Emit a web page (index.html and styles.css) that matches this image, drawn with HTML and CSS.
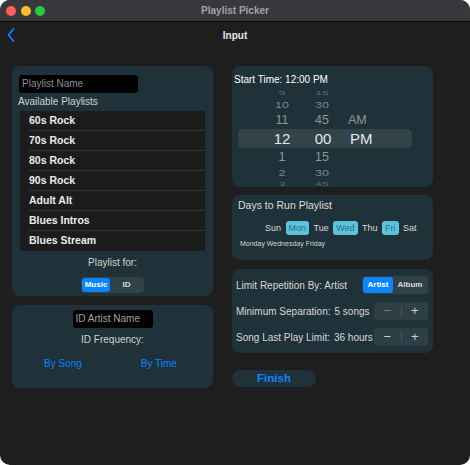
FILE: index.html
```html
<!DOCTYPE html>
<html>
<head>
<meta charset="utf-8">
<link rel="stylesheet" href="styles.css">
</head>
<body>
<div class="window">
  <div class="titlebar">
    <div class="lights">
      <span class="light red"></span>
      <span class="light yellow"></span>
      <span class="light green"></span>
    </div>
    <div class="title">Playlist Picker</div>
    <div></div>
  </div>
  <div class="nav">
    <div class="nav-left">
      <svg class="back" width="8" height="14" viewBox="0 0 8 14"><path d="M6.5 1 L1.5 7 L6.5 13" fill="none" stroke="#0a84ff" stroke-width="1.8" stroke-linecap="round" stroke-linejoin="round"/></svg>
    </div>
    <div class="nav-title">Input</div>
    <div></div>
  </div>
  <div class="content">
    <div class="col">
      <section class="panel playlists">
        <div class="field name-field">Playlist Name</div>
        <div class="label avail">Available Playlists</div>
        <div class="list">
          <div class="row">60s Rock</div>
          <div class="row">70s Rock</div>
          <div class="row">80s Rock</div>
          <div class="row">90s Rock</div>
          <div class="row">Adult Alt</div>
          <div class="row">Blues Intros</div>
          <div class="row last">Blues Stream</div>
        </div>
        <div class="label center for">Playlist for:</div>
        <div class="seg seg-left">
          <span class="seg-item on music">Music</span>
          <span class="seg-item">ID</span>
        </div>
      </section>
      <section class="panel idpanel">
        <div class="field id-field">ID Artist Name</div>
        <div class="label center freq">ID Frequency:</div>
        <div class="links">
          <span class="link">By Song</span>
          <span class="link">By Time</span>
        </div>
      </section>
    </div>
    <div class="col">
      <section class="panel timepanel">
        <div class="start">Start Time: 12:00 PM</div>
        <div class="picker">
          <div class="prow r1"><span class="h">9</span><span class="m">15</span><span class="ap"></span></div>
          <div class="prow r2"><span class="h">10</span><span class="m">30</span><span class="ap"></span></div>
          <div class="prow r3"><span class="h">11</span><span class="m">45</span><span class="ap">AM</span></div>
          <div class="prow sel"><span class="h">12</span><span class="m">00</span><span class="ap">PM</span></div>
          <div class="prow r5"><span class="h">1</span><span class="m">15</span><span class="ap"></span></div>
          <div class="prow r6"><span class="h">2</span><span class="m">30</span><span class="ap"></span></div>
          <div class="prow r7"><span class="h">3</span><span class="m">45</span><span class="ap"></span></div>
        </div>
      </section>
      <section class="panel dayspanel">
        <div class="days-title">Days to Run Playlist</div>
        <div class="days">
          <span class="day">Sun</span>
          <span class="day on">Mon</span>
          <span class="day">Tue</span>
          <span class="day on">Wed</span>
          <span class="day">Thu</span>
          <span class="day on">Fri</span>
          <span class="day">Sat</span>
        </div>
        <div class="days-summary">Monday Wednesday Friday</div>
      </section>
      <section class="panel limitpanel">
        <div class="lrow">
          <span class="ltext">Limit Repetition By: Artist</span>
          <div class="seg seg-right">
            <span class="seg-item on artist">Artist</span>
            <span class="seg-item">Album</span>
          </div>
        </div>
        <div class="lrow gap">
          <span class="ltext">Minimum Separation:<span class="val v1">5 songs</span></span>
          <div class="stepper">
            <span class="step dim">−</span>
            <span class="divider"></span>
            <span class="step">+</span>
          </div>
        </div>
        <div class="lrow gap">
          <span class="ltext">Song Last Play Limit:<span class="val v2">36 hours</span></span>
          <div class="stepper">
            <span class="step">−</span>
            <span class="divider"></span>
            <span class="step">+</span>
          </div>
        </div>
      </section>
      <div class="finish">Finish</div>
    </div>
  </div>
</div>
</body>
</html>
```
FILE: styles.css
```css
html { background: #ffffff; }
body {
  margin: 0;
  font-family: "Liberation Sans", Arial, sans-serif;
}
.window {
  width: 470px;
  height: 465px;
  background: #1e1e1e;
  border-radius: 10px;
  overflow: hidden;
  color: #e6e6e6;
}
.titlebar {
  height: 21px;
  background: #38373b;
  border-bottom: 1px solid #0f0f0f;
  display: grid;
  grid-template-columns: 1fr auto 1fr;
  align-items: center;
}
.lights {
  display: flex;
  gap: 4.5px;
  padding-left: 6px;
}
.light {
  width: 10px;
  height: 10px;
  border-radius: 50%;
  display: block;
}
.red { background: #ff5f57; }
.yellow { background: #febc2e; }
.green { background: #28c840; }
.title {
  font-size: 10px;
  font-weight: bold;
  color: #a3a2a6;
}
.nav {
  height: 26px;
  display: grid;
  grid-template-columns: 1fr auto 1fr;
  align-items: center;
}
.nav-left { padding-left: 7px; display: flex; }
.nav-title {
  font-size: 10px;
  font-weight: bold;
  color: #e8e8e8;
}
.content {
  margin-top: 18px;
  padding-left: 12px;
  display: grid;
  grid-template-columns: 201px 201px;
  column-gap: 19px;
}
.col { display: flex; flex-direction: column; }
.panel {
  background: #1f3239;
  border-radius: 8px;
  box-sizing: border-box;
}
.field {
  background: #000;
  border-radius: 3px;
  height: 18px;
  line-height: 18px;
  font-size: 10px;
  color: #8e8e93;
  padding-left: 3px;
  box-sizing: border-box;
}
.label {
  font-size: 10px;
  color: #d2d2d2;
}
.center { text-align: center; }

/* playlists panel */
.playlists {
  height: 230px;
  padding: 9px 8px 0;
}
.name-field { width: 119px; margin-left: -1px; }
.avail { height: 18px; line-height: 18px; margin-left: -2px; }
.list {
  height: 140px;
  background: #1c1c1d;
}
.row {
  height: 20px;
  line-height: 19px;
  margin-left: 9px;
  border-bottom: 1px solid #353535;
  box-sizing: border-box;
  font-size: 10.5px;
  font-weight: bold;
  color: #ececec;
}
.row.last { border-bottom: none; }
.for { margin-top: 5px; line-height: 14px; }

.seg {
  display: flex;
  background: rgba(255,255,255,0.08);
  border-radius: 4px;
  padding: 1px;
  box-sizing: border-box;
}
.seg-item {
  flex: 1;
  font-size: 8px;
  font-weight: bold;
  color: #dcdcdc;
  text-align: center;
  border-radius: 3.5px;
}
.seg-item.on {
  background: #0a84ff;
  color: #fff;
  flex: none;
}
.seg-left {
  width: 63px;
  height: 16px;
  margin: 7px auto 0;
}
.seg-left .seg-item { line-height: 14px; }
.music { width: 28px; }

/* id panel */
.idpanel {
  height: 83px;
  margin-top: 9px;
  padding-top: 5px;
}
.id-field { width: 80px; margin: 0 auto; color: #a4a4a8; }
.freq { margin-top: 5px; line-height: 14px; }
.links {
  display: flex;
  gap: 59px;
  padding-left: 32px;
  margin-top: 10px;
}
.link {
  font-size: 10px;
  line-height: 14px;
  color: #0a84ff;
}

/* time panel */
.timepanel {
  height: 121px;
  padding: 8px 0 0 2px;
  overflow: hidden;
}
.start {
  font-size: 10px;
  line-height: 12px;
  color: #ffffff;
  margin-bottom: 2px;
}
.picker {
  margin-left: 4px;
  width: 174px;
}
.prow {
  display: flex;
  align-items: center;
  font-size: 12.5px;
  color: #8d9599;
}
.prow span { display: block; }
.prow .h { width: 30px; margin-left: 29px; text-align: center; }
.prow .m { width: 30px; margin-left: 10px; text-align: center; }
.prow .ap { margin-left: 11px; }
.r1, .r7 { height: 10px; color: #5d676b; }
.r1 span, .r7 span { transform: scaleY(0.45); }
.r2, .r6 { height: 13px; color: #7d8589; }
.r2 span, .r6 span { transform: scaleY(0.78); }
.r3, .r5 { height: 18px; }
.r3 span, .r5 span { transform: scaleY(0.95); }
.sel {
  height: 19px;
  background: #32434a;
  border-radius: 5px;
  font-size: 15px;
  color: #e6e8e9;
}
.sel .h { margin-left: 28px; width: 32px; }
.sel .m { width: 32px; margin-left: 9px; }

/* days panel */
.dayspanel {
  height: 65px;
  margin-top: 8px;
  padding: 4px 6px 0;
}
.days-title {
  font-size: 10.5px;
  line-height: 12px;
  color: #dedede;
}
.days {
  display: flex;
  gap: 1.5px;
  margin: 10px 0 0 24px;
}
.day {
  height: 14px;
  line-height: 14px;
  padding: 0 3px;
  font-size: 9px;
  color: #d8d8d8;
  border-radius: 3px;
}
.day.on {
  background: #5ec3df;
  color: #2f6e84;
}
.days-summary {
  margin: 3px 0 0 2px;
  font-size: 7px;
  line-height: 12px;
  color: #d4d4d4;
}

/* limit panel */
.limitpanel {
  height: 84px;
  margin-top: 9px;
  padding: 7px 5px 0 4px;
}
.lrow {
  display: flex;
  align-items: center;
  justify-content: space-between;
  height: 18px;
}
.lrow.gap { margin-top: 8px; }
.ltext {
  font-size: 10px;
  color: #d8d8d8;
  white-space: nowrap;
}
.val.v1 { margin-left: 4px; }
.val.v2 { margin-left: 4px; }
.seg-right {
  width: 66px;
  height: 18px;
}
.seg-right .seg-item { line-height: 16px; }
.artist { width: 30px; }
.stepper {
  width: 54px;
  height: 18px;
  background: rgba(255,255,255,0.07);
  border-radius: 4px;
  display: flex;
  align-items: center;
}
.step {
  flex: 1;
  text-align: center;
  font-size: 13px;
  line-height: 18px;
  color: #cfcfcf;
}
.step.dim { color: #7f8588; }
.divider {
  width: 1px;
  height: 10px;
  background: #4a555a;
}

.finish {
  margin-top: 17px;
  width: 84px;
  height: 17px;
  line-height: 17px;
  border-radius: 9px;
  background: #1f3239;
  color: #0a84ff;
  font-size: 11.5px;
  font-weight: bold;
  text-align: center;
}
```
